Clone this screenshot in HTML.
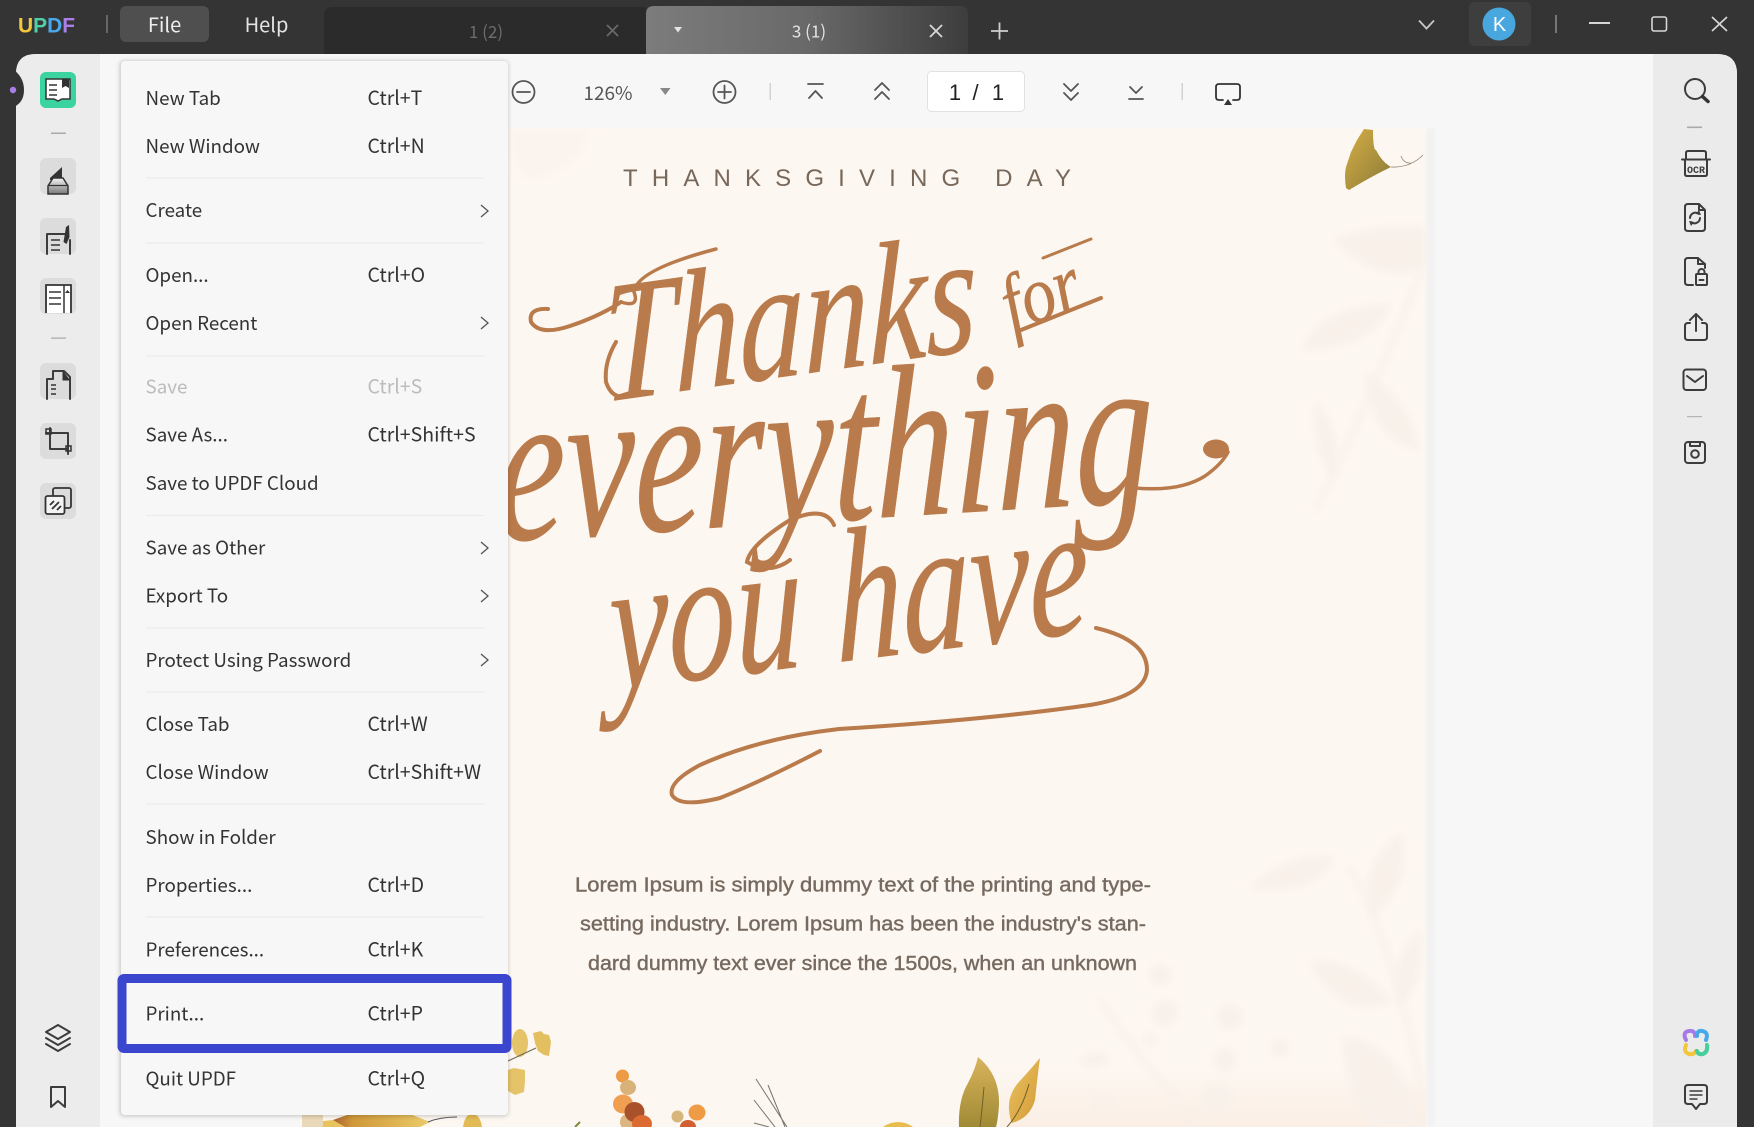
<!DOCTYPE html>
<html>
<head>
<meta charset="utf-8">
<style>
html,body{margin:0;padding:0;background:#333;width:1754px;height:1127px;overflow:hidden}
svg{display:block}
.m{font-family:"Noto Sans CJK SC","Liberation Sans",sans-serif;font-size:19.500px;fill:#333}
.l{font-size:18.800px}
.d{fill:#bcbcbc}
.t{font-family:"Noto Sans CJK SC","Liberation Sans",sans-serif}
.s{font-family:"Liberation Serif",serif;font-style:italic;fill:#b97b4b;stroke:#b97b4b;stroke-width:.5}
.b{font-family:"Liberation Sans",sans-serif;font-size:20px;fill:#766a60;stroke:#766a60;stroke-width:.4}
.i{fill:none;stroke:#3c3c3c;stroke-width:2;stroke-linecap:round;stroke-linejoin:round}
.n{fill:none;stroke:#555;stroke-width:1.800;stroke-linecap:round;stroke-linejoin:round}
</style>
</head>
<body>
<svg width="1754" height="1127" viewBox="0 0 1754 1127" xmlns="http://www.w3.org/2000/svg">
<defs>
<linearGradient id="tab" x1="0" x2="1" y1="0" y2="0"><stop offset="0" stop-color="#7c7c7c"/><stop offset=".5" stop-color="#696969"/><stop offset="1" stop-color="#3d3d3d"/></linearGradient>
<linearGradient id="gk" x1="0" x2="1" y1="0" y2="1"><stop offset="0" stop-color="#d6ae45"/><stop offset="1" stop-color="#8a7a38"/></linearGradient>
<linearGradient id="lf" x1="0" x2="0" y1="0" y2="1"><stop offset="0" stop-color="#d9b45c"/><stop offset="1" stop-color="#a08a35"/></linearGradient>
<linearGradient id="lf2" x1="0" x2="1" y1="0" y2="1"><stop offset="0" stop-color="#e8c363"/><stop offset="1" stop-color="#d49a35"/></linearGradient>
<linearGradient id="hl" x1="0" x2="0" y1="0" y2="1"><stop offset="0" stop-color="#f5f5f5"/><stop offset="1" stop-color="#777"/></linearGradient>
<linearGradient id="gd" x1="0" x2="1" y1="0" y2="0"><stop offset="0" stop-color="#a8602f"/><stop offset=".2" stop-color="#cf9838"/><stop offset="1" stop-color="#eccb6a"/></linearGradient>
<linearGradient id="wash" x1="0" x2="0" y1="0" y2="1"><stop offset="0" stop-color="#f9ede2" stop-opacity="0"/><stop offset="1" stop-color="#fbefe5"/></linearGradient>
<filter id="bl" x="-30%" y="-30%" width="160%" height="160%"><feGaussianBlur stdDeviation="3.500"/></filter>
<filter id="sh" x="-5%" y="-5%" width="110%" height="110%"><feGaussianBlur stdDeviation="2.500"/></filter>
<clipPath id="pg"><rect x="300" y="128" width="1126" height="999"/></clipPath>
</defs>

<!-- frame -->
<rect width="1754" height="1127" fill="#343434"/>
<!-- tabs -->
<path d="M324 54V16q0-9 9-9H646V54Z" fill="#2b2b2b"/>
<text x="486" y="38" class="t" font-size="17" fill="#6d6d6d" text-anchor="middle">1 (2)</text>
<path d="M607 25l11 11M618 25l-11 11" stroke="#696969" stroke-width="1.800" fill="none"/>
<path d="M646 54V14q0-8 8-8H960q8 0 8 8V54Z" fill="url(#tab)"/>
<path d="M674 27h8l-4 5.500Z" fill="#e5e5e5"/>
<text x="809" y="37.500" class="t" font-size="17" fill="#e4e4e4" text-anchor="middle">3 (1)</text>
<path d="M930 25l12 12M942 25l-12 12" stroke="#d8d8d8" stroke-width="1.800" fill="none"/>
<path d="M991 31h17M999.500 22.500v17" stroke="#cfcfcf" stroke-width="1.800" fill="none"/>

<!-- title bar left -->
<text x="18" y="32.500" font-family="Liberation Sans" font-weight="700" font-size="21" textLength="57" lengthAdjust="spacingAndGlyphs"><tspan fill="#f3c63c">U</tspan><tspan fill="#4fcfa9">P</tspan><tspan fill="#4aa9ea">D</tspan><tspan fill="#ab7fe6">F</tspan></text>
<rect x="106" y="15" width="2" height="18" fill="#666"/>
<rect x="120" y="6" width="89" height="36" rx="6" fill="#4f4f4f"/>
<text x="164.500" y="32" class="t" font-size="20" fill="#eee" text-anchor="middle">File</text>
<text x="266.500" y="32" class="t" font-size="20" fill="#e4e4e4" text-anchor="middle">Help</text>

<!-- title bar right -->
<path d="M1419 20.500l7.500 8 7.500-8" stroke="#c8c8c8" stroke-width="1.800" fill="none"/>
<rect x="1469" y="2" width="62" height="44" rx="5" fill="#3e3e3e"/>
<circle cx="1499" cy="24" r="16.500" fill="#49a7e0"/>
<text x="1499.500" y="31" font-family="Liberation Sans" font-size="20" fill="#fff" text-anchor="middle">K</text>
<rect x="1555" y="15" width="2" height="18" fill="#777"/>
<rect x="1589" y="22" width="21" height="2" fill="#d6d6d6"/>
<rect x="1652" y="17" width="14.500" height="14" rx="2" fill="none" stroke="#d6d6d6" stroke-width="1.600"/>
<path d="M1712 17l15 14M1727 17l-15 14" stroke="#d6d6d6" stroke-width="1.700" fill="none"/>

<!-- panel -->
<path d="M16 1127V74q0-20 20-20H1717q20 0 20 20V1127Z" fill="#f7f7f7"/>
<path d="M16 1127V74q0-20 20-20H100V1127Z" fill="#ececec"/>
<path d="M1653 54H1717q20 0 20 20V1127H1653Z" fill="#ebebeb"/>
<path d="M0 68H11Q24 76 24 90T11 108H0Z" fill="#343434"/>
<circle cx="13" cy="90" r="3.200" fill="#a97ee8"/>

<!-- page -->
<rect x="1426" y="128" width="9" height="999" fill="#eee" opacity=".6" filter="url(#sh)"/>
<rect x="300" y="128" width="1126" height="999" fill="#fdf7f1"/>
<g clip-path="url(#pg)">
 <rect x="1000" y="1070" width="426" height="57" fill="url(#wash)"/>
 <g fill="#f8f0e9" filter="url(#bl)">
  <path d="M1334 240Q1380 222 1426 228V268Q1375 285 1334 240Z"/>
  <path d="M1302 350Q1320 305 1391 305Q1370 350 1302 350Z"/>
  <path d="M1366 373Q1410 400 1419 450Q1370 440 1366 373Z"/>
  <path d="M1316 400Q1345 440 1335 480Q1310 450 1316 400Z"/>
  <path d="M1400 833Q1415 880 1372 917Q1355 870 1400 833Z"/>
  <path d="M1250 888Q1290 850 1333 858Q1320 895 1250 888Z"/>
  <path d="M1310 962Q1350 955 1393 1002Q1340 1020 1310 962Z"/>
  <path d="M1420 930Q1426 980 1400 1007Q1385 965 1420 930Z"/>
  <path d="M1343 1037Q1400 1040 1423 1127H1370Q1345 1090 1343 1037Z"/>
  <circle cx="1230" cy="1017" r="12"/><circle cx="1165" cy="1013" r="12"/><circle cx="1160" cy="975" r="10"/>
  <circle cx="1217" cy="1097" r="14"/><circle cx="1103" cy="1102" r="8"/><circle cx="1280" cy="1048" r="9"/>
  <circle cx="1225" cy="1060" r="11"/><circle cx="1150" cy="1040" r="6"/>
  <path d="M1080 1060Q1095 1045 1110 1058Q1100 1070 1085 1066Z"/>
  <path d="M510 130H590Q580 170 530 180Q512 170 510 130Z" opacity=".3"/>
 </g>
 <g fill="none" stroke="#f8f0e9" stroke-width="4" filter="url(#bl)">
  <path d="M1422 270Q1370 400 1316 510"/>
  <path d="M1350 867Q1400 960 1423 1100"/>
  <path d="M1100 1000Q1140 1060 1200 1127"/>
 </g>

 <!-- ginkgo -->
 <path d="M1364 129L1373 130Q1373 150 1376 150Q1382 162 1391 167Q1372 176 1349 190L1346 188Q1344 175 1346 167L1351 152L1357 140Z" fill="url(#gk)"/>
 <path d="M1391 167Q1410 168 1423 155M1401 156Q1404 164 1412 163" stroke="#8f8572" stroke-width=".8" fill="none"/>

 <text x="623" y="186" font-family="Liberation Sans" font-size="24" fill="#78685a" textLength="448" lengthAdjust="spacing">THANKSGIVING DAY</text>

 <!-- script -->
 <text class="s" font-size="172" transform="translate(603,402) rotate(-8) skewX(-8) scale(.76,1)">Thanks</text>
 <text class="s" font-size="80" transform="translate(1012,332) rotate(-20) scale(.85,1)">for</text>
 <text class="s" font-size="218" transform="translate(496,541) rotate(-3.500) skewX(-4) scale(.715,1)">everything</text>
 <text class="s" font-size="190" transform="translate(610,690) rotate(-7) skewX(-6) scale(.71,1)">you have</text>

 <g fill="none" stroke="#b97b4b" stroke-linecap="round">
  <path d="M548 309Q528 308 531 322Q540 336 570 326Q600 316 621 302" stroke-width="4"/>
  <path d="M621 302Q640 308 634 292Q636 270 716 249" stroke-width="3.500"/>
  <path d="M628 396Q612 400 606 382Q604 362 616 342" stroke-width="4"/>
  <path d="M1043 258L1091 239" stroke-width="3"/>
  <path d="M1021 330L1101 298" stroke-width="4"/>
  <path d="M1135 488Q1180 492 1205 476Q1222 464 1228 452" stroke-width="3.500"/>
  <path d="M834 525Q825 505 790 520Q750 545 747 562Q770 575 790 560" stroke-width="4"/>
  <path d="M1096 628Q1147 640 1147 670Q1145 696 1090 705Q985 720 839 729Q760 738 700 765Q668 782 672 795Q680 808 720 798Q760 782 820 751" stroke-width="4"/>
 </g>
 <ellipse cx="1216" cy="449" rx="13" ry="9.500" fill="#b97b4b"/>

 <!-- body -->
 <text x="575" y="891.500" class="b" textLength="576" lengthAdjust="spacingAndGlyphs">Lorem Ipsum is simply dummy text of the printing and type-</text>
 <text x="580" y="930.500" class="b" textLength="566" lengthAdjust="spacingAndGlyphs">setting industry. Lorem Ipsum has been the industry's stan-</text>
 <text x="588" y="970" class="b" textLength="549" lengthAdjust="spacingAndGlyphs">dard dummy text ever since the 1500s, when an unknown</text>

 <!-- bottom florals -->
 <ellipse cx="520" cy="1043" rx="8" ry="14" fill="#e5c369"/>
 <path d="M533 1033l8-2 3 3 5 1 2 7-1 7-1 7-5-1-6-4-3-8Z" fill="#e3bf5f"/>
 <path d="M508 1061L536 1048" stroke="#6f6a52" stroke-width="1.100"/>
 <path d="M508 1070l6-2 11 2 0 11-1 11-9 3-7-4Z" fill="#e5c369"/>
 <ellipse cx="622.500" cy="1076" rx="6.500" ry="6.500" fill="#ef9a45"/>
 <ellipse cx="628" cy="1087.500" rx="8" ry="7.500" fill="#d9b27a"/>
 <ellipse cx="623" cy="1104" rx="10" ry="9.500" fill="#f09f52"/>
 <ellipse cx="627" cy="1122" rx="7" ry="8" fill="#dcb680"/>
 <ellipse cx="634.500" cy="1112" rx="10" ry="10" fill="#a9512b"/>
 <ellipse cx="642" cy="1124" rx="10" ry="9" fill="#dc6b32"/>
 <ellipse cx="677.500" cy="1116.500" rx="6" ry="6" fill="#d7b67c"/>
 <ellipse cx="697" cy="1112.500" rx="8.500" ry="8" fill="#ef9a45"/>
 <ellipse cx="688" cy="1127" rx="8" ry="7" fill="#d25f30"/>
 <path d="M756 1079L787 1127M768 1085L785 1127M754 1100L775 1127M754 1123L769 1127" stroke="#77736a" stroke-width="1" fill="none"/>
 <path d="M978 1057Q1000 1075 999 1105Q998 1120 996 1127H959Q958 1100 968 1083Q975 1070 978 1057Z" fill="url(#lf)"/>
 <path d="M984 1087Q982 1110 980 1127" stroke="#6f5f2c" stroke-width="1" fill="none"/>
 <path d="M1040 1058Q1030 1070 1018 1083Q1008 1095 1009 1110Q1010 1120 1012 1123Q1030 1118 1035 1100Q1037 1080 1040 1058Z" fill="url(#lf2)"/>
 <path d="M1029 1084Q1022 1110 1007 1127" stroke="#6f5f2c" stroke-width="1" fill="none"/>
 <path d="M883 1127Q890 1122 898 1122Q906 1122 913 1127Z" fill="#e8bc4e"/>
 <path d="M302 1114H323V1127H302Z" fill="#ead9b8"/>
 <path d="M323 1121L333 1120L345 1127H323Z" fill="#e8c35d"/>
 <path d="M333 1120L350 1114H410L430 1122L420 1127H345Z" fill="url(#gd)"/>
 <path d="M428 1122Q440 1117 457 1117" stroke="#555" stroke-width="1" fill="none"/>
 <path d="M463 1127Q465 1114 472 1114Q480 1114 482 1127Z" fill="#e3bb55"/>
 <path d="M575 1127L580 1122" stroke="#7d8b3e" stroke-width="2"/>
</g>

<!-- toolbar -->
<rect x="508" y="54" width="1145" height="74" fill="#f7f7f7"/>
<g class="n">
 <circle cx="523.500" cy="92" r="11"/><path d="M517 92h13"/>
 <circle cx="724.500" cy="92" r="11"/><path d="M718 92h13M724.500 85.500v13"/>
 <path d="M808 84h15M809 98l6.500-7 6.500 7"/>
 <path d="M875 90l7-7 7 7M875 99l7-7 7 7"/>
 <path d="M1064 84l7 7 7-7M1064 93l7 7 7-7"/>
 <path d="M1130 87l6 6 6-6M1129 99h14"/>
 <path d="M1223 100h-4q-3 0-3-3V87q0-3 3-3H1237q3 0 3 3v10q0 3-3 3h-4" stroke="#333"/>
</g>
<path d="M1224 105l4-6 4 6Z" fill="#333"/>
<text x="608" y="100" class="t" font-size="19" fill="#555" text-anchor="middle">126%</text>
<path d="M660 88h10.500l-5.200 7Z" fill="#888"/>
<rect x="769.500" y="83" width="1.500" height="17" fill="#d2d2d2"/>
<rect x="1181.500" y="83" width="1.500" height="17" fill="#d2d2d2"/>
<rect x="927.500" y="71.500" width="97" height="40" rx="4" fill="#fff" stroke="#e2e2e2"/>
<g font-family="Liberation Sans" font-size="22" fill="#222" text-anchor="middle">
 <text x="955" y="100">1</text><text x="975.500" y="100">/</text><text x="998" y="100">1</text>
</g>

<!-- left sidebar icons -->
<rect x="40" y="72" width="36" height="36" rx="6" fill="#3bd4a0"/>
<path d="M46 79H70V99H62L58 101 54 99H46Z" fill="#fff" stroke="#333" stroke-width="1.500"/>
<path d="M49 85h8M49 90h8M49 95h8" stroke="#333" stroke-width="1.500" fill="none"/>
<path d="M62 79h7v9l-3.500-2-3.500 2Z" fill="#333"/>
<rect x="51" y="132.500" width="15" height="1.500" fill="#a9a9a9"/>
<g fill="#dcdcdc">
 <rect x="40" y="158" width="36" height="36" rx="6"/>
 <rect x="40" y="218" width="36" height="36" rx="6"/>
 <rect x="40" y="278" width="36" height="36" rx="6"/>
 <rect x="40" y="363" width="36" height="36" rx="6"/>
 <rect x="40" y="423" width="36" height="36" rx="6"/>
 <rect x="40" y="483" width="36" height="36" rx="6"/>
</g>
<path d="M50 178L62 167V180H50Z" fill="#333"/>
<path d="M48 194V186L53 178H63L68 186V194Z" fill="url(#hl)" stroke="#333" stroke-width="1.500"/>
<path d="M47.500 185.500H68.500" stroke="#333" stroke-width="1.200"/>
<path d="M47 254V234H66M70 254V240" class="i" stroke-width="1.800"/>
<path d="M51 240h9M51 245h9M51 250h9" stroke="#333" stroke-width="1.500"/>
<path d="M66 227l3-2 .5 12-3 7-3-2Z" fill="#333"/>
<path d="M46 313V285H71V313" fill="#fff" stroke="#333" stroke-width="1.800"/>
<path d="M64 285V313M49 292h12M49 298h12M49 304h12" stroke="#333" stroke-width="1.500"/>
<path d="M65 293l2.500-3 2.500 3Z" fill="#333"/>
<path d="M47 399V379H53M70 399V377L64 371H53V379" class="i" stroke-width="1.800"/>
<path d="M63 371V380H70" fill="#333" stroke="#333" stroke-width="1"/>
<path d="M51 385h5M51 389h5M51 394h5" stroke="#333" stroke-width="1.500"/>
<path d="M50 428V449H68M46 433H68V454" class="i" stroke-width="1.800"/>
<rect x="46" y="429" width="5" height="5" fill="none" stroke="#333" stroke-width="1.500"/>
<rect x="66" y="446" width="5" height="5" fill="none" stroke="#333" stroke-width="1.500"/>
<rect x="53" y="488" width="18" height="20" rx="2" fill="none" stroke="#333" stroke-width="1.800"/>
<rect x="45.500" y="496" width="19" height="18" rx="2" fill="#f4f4f4" stroke="#333" stroke-width="1.800"/>
<path d="M50 505l4-4M52 509l7-7M57 510l4-4" stroke="#333" stroke-width="1.800"/>
<rect x="51" y="337.500" width="15" height="1.200" fill="#a9a9a9"/>
<path d="M58 1025l12 7-12 7-12-7ZM46 1038l12 7 12-7M46 1044l12 7 12-7" class="i" stroke-width="1.600"/>
<path d="M51 1087H65V1107L58 1101 51 1107Z" class="i" stroke-width="1.800"/>

<!-- right sidebar icons -->
<circle cx="1695" cy="89" r="10" class="i"/>
<path d="M1702.500 96.500l5.500 5" stroke="#333" stroke-width="3.500" stroke-linecap="round"/>
<rect x="1687" y="126.500" width="15" height="1.600" fill="#a9a9a9"/>
<path d="M1686 159V153q0-2 2-2H1704q2 0 2 2v6M1682 159.500H1710M1685 160v14q0 2 2 2H1705q2 0 2-2V160" class="i" stroke-width="1.700"/>
<text x="1696" y="173" font-family="Liberation Mono" font-weight="700" font-size="10" fill="#3c3c3c" text-anchor="middle">OCR</text>
<path d="M1688 204H1699L1705 210V228q0 3-3 3H1688q-3 0-3-3V207q0-3 3-3ZM1699 204V210H1705" class="i" stroke-width="1.700"/>
<path d="M1690 218a5.500 5.500 0 0 1 9-4M1700 218a5.500 5.500 0 0 1-9 4" class="i" stroke-width="1.700"/>
<path d="M1699 210l2 5-5-1ZM1691 226l-2-5 5 1Z" fill="#3c3c3c"/>
<path d="M1693 285H1688q-3 0-3-3V261q0-3 3-3H1698L1705 264V268M1698 258V264H1705" class="i" stroke-width="1.700"/>
<rect x="1696" y="274" width="11" height="11" rx="1" class="i" stroke-width="1.700"/>
<path d="M1698.500 274v-2a3 3 0 0 1 6 0v2M1699.500 280h4" class="i" stroke-width="1.500"/>
<path d="M1690 323H1688q-3 0-3 3V337q0 3 3 3H1704q3 0 3-3V326q0-3-3-3H1702M1696 331V314M1690 320l6-6 6 6" class="i" stroke-width="1.700"/>
<rect x="1683.500" y="369.500" width="22.500" height="20.500" rx="3" class="i" stroke-width="1.700"/>
<path d="M1687 376l8 6 8-6" class="i" stroke-width="1.700"/>
<rect x="1687" y="416" width="15" height="1.200" fill="#b5b5b5"/>
<rect x="1685" y="442" width="20" height="21" rx="3" class="i" stroke-width="1.700"/>
<path d="M1690 442V446H1700V442" class="i" stroke-width="1.700"/>
<circle cx="1695" cy="454" r="3.800" class="i" stroke-width="1.700"/>

<g fill="none" stroke-width="4" stroke-linecap="round">
 <path d="M1686 1040Q1682 1032 1689 1031Q1695 1030 1695 1036" stroke="#a57be8"/>
 <path d="M1697 1036Q1697 1030 1702 1031Q1709 1032 1706 1040" stroke="#45a9ea"/>
 <path d="M1686 1045Q1683 1052 1689 1054Q1694 1055 1696 1051" stroke="#f3c63c"/>
 <path d="M1707 1045Q1708 1052 1703 1054Q1698 1055 1697 1051" stroke="#47cf9b"/>
</g>
<path d="M1688 1085H1704q3 0 3 3V1101q0 3-3 3H1700L1696 1109 1692 1104H1688q-3 0-3-3V1088q0-3 3-3Z" class="i" stroke-width="1.700"/>
<path d="M1689.500 1091h13M1689.500 1095h13M1689.500 1099h8" stroke="#3c3c3c" stroke-width="1.500"/>

<!-- menu -->
<rect x="120" y="61" width="388" height="1055" rx="4" fill="#000" opacity=".22" filter="url(#sh)"/>
<rect x="121" y="61" width="387" height="1054" rx="4" fill="#f7f7f7"/>
<g stroke="#ececec" stroke-width="1.200">
 <path d="M146 178H484M146 243H484M146 356H484M146 515.500H484M146 628H484M146 692H484M146 804H484M146 917H484"/>
</g>
<g class="m">
 <text x="145.500" y="105" class="l">New Tab</text><text x="367.500" y="105">Ctrl+T</text>
 <text x="145.500" y="153" class="l">New Window</text><text x="367.500" y="153">Ctrl+N</text>
 <text x="145.500" y="217" class="l">Create</text>
 <text x="145.500" y="282" class="l">Open...</text><text x="367.500" y="282">Ctrl+O</text>
 <text x="145.500" y="330" class="l">Open Recent</text>
 <text x="145.500" y="393.500" class="l d">Save</text><text x="367.500" y="393.500" class="d">Ctrl+S</text>
 <text x="145.500" y="441.500" class="l">Save As...</text><text x="367.500" y="441.500">Ctrl+Shift+S</text>
 <text x="145.500" y="490" class="l">Save to UPDF Cloud</text>
 <text x="145.500" y="554.500" class="l">Save as Other</text>
 <text x="145.500" y="602.500" class="l">Export To</text>
 <text x="145.500" y="667" class="l">Protect Using Password</text>
 <text x="145.500" y="731" class="l">Close Tab</text><text x="367.500" y="731">Ctrl+W</text>
 <text x="145.500" y="779" class="l">Close Window</text><text x="367.500" y="779">Ctrl+Shift+W</text>
 <text x="145.500" y="844" class="l">Show in Folder</text>
 <text x="145.500" y="892" class="l">Properties...</text><text x="367.500" y="892">Ctrl+D</text>
 <text x="145.500" y="956.500" class="l">Preferences...</text><text x="367.500" y="956.500">Ctrl+K</text>
 <text x="145.500" y="1020.500" class="l">Print...</text><text x="367.500" y="1020.500">Ctrl+P</text>
 <text x="145.500" y="1085.500" class="l">Quit UPDF</text><text x="367.500" y="1085.500">Ctrl+Q</text>
</g>
<g fill="none" stroke="#555" stroke-width="1.300">
 <path d="M481 205l7 6-7 6M481 317l7 6-7 6M481 542l7 6-7 6M481 590l7 6-7 6M481 654l7 6-7 6"/>
</g>
<rect x="122" y="978.500" width="385" height="70" rx="2" fill="none" stroke="#3a46cd" stroke-width="9"/>
</svg>
</body>
</html>
